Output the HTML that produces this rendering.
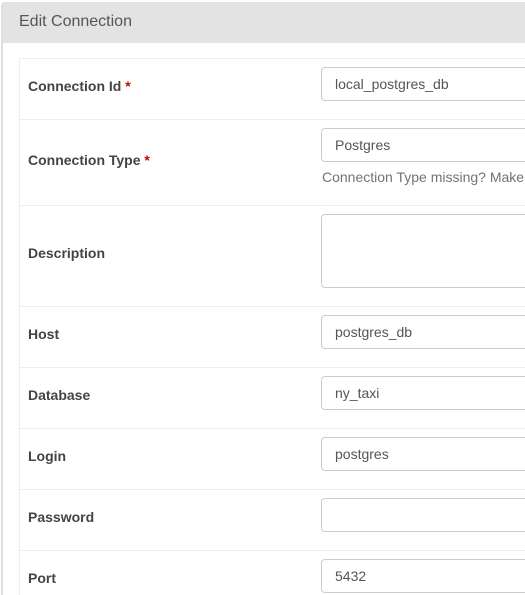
<!DOCTYPE html>
<html><head><style>
html,body{margin:0;width:525px;height:595px;overflow:hidden;background:#fff;font-family:"Liberation Sans",sans-serif;}
#w{position:relative;width:525px;height:595px;overflow:hidden;}
.panel{position:absolute;left:1px;top:2px;width:524px;height:593px;border-left:2px solid #e0e0e0;border-top:1px solid #e0e0e0;border-top-left-radius:4px;box-sizing:border-box;}
.hd{position:absolute;left:0;top:0;right:0;height:40px;background:#e3e3e3;}
.hd span{position:absolute;left:16px;top:10px;font-size:16px;color:#555;}
.row{position:absolute;left:19px;width:506px;border-top:1px solid #eee;}
.lab{position:absolute;left:28px;font-size:14px;font-weight:bold;color:#444;}
.req{color:#c00;}
.inp{position:absolute;left:321px;width:220px;height:32px;border:1px solid #ccc;border-radius:4px;box-sizing:border-box;font-size:14px;color:#555;padding:8px 0 0 13px;white-space:nowrap;}
.help{position:absolute;left:322px;top:169px;width:203px;overflow:hidden;font-size:14px;color:#737373;white-space:nowrap;}
.vl{position:absolute;left:19px;top:58px;width:1px;height:537px;background:#eee;}
</style></head><body><div id="w">
<div class="panel"><div class="hd"><span>Edit Connection</span></div></div>
<div class="vl"></div>
<div class="row" style="top:58px"></div>
<div class="row" style="top:119px"></div>
<div class="row" style="top:205px"></div>
<div class="row" style="top:306px"></div>
<div class="row" style="top:367px"></div>
<div class="row" style="top:428px"></div>
<div class="row" style="top:489px"></div>
<div class="row" style="top:550px"></div>

<div class="lab" style="top:78px">Connection Id <span class="req">*</span></div>
<div class="inp" style="top:67px;height:34px">local_postgres_db</div>

<div class="lab" style="top:152px">Connection Type <span class="req">*</span></div>
<div class="inp" style="top:128px;height:34px">Postgres</div>
<div class="help">Connection Type missing? Make sure</div>

<div class="lab" style="top:245px">Description</div>
<div class="inp" style="top:214px;height:74px"></div>

<div class="lab" style="top:326px">Host</div>
<div class="inp" style="top:315px;height:34px">postgres_db</div>

<div class="lab" style="top:387px">Database</div>
<div class="inp" style="top:376px;height:34px">ny_taxi</div>

<div class="lab" style="top:448px">Login</div>
<div class="inp" style="top:437px;height:34px">postgres</div>

<div class="lab" style="top:509px">Password</div>
<div class="inp" style="top:498px;height:34px"></div>

<div class="lab" style="top:570px">Port</div>
<div class="inp" style="top:559px;height:34px">5432</div>
</div></body></html>
